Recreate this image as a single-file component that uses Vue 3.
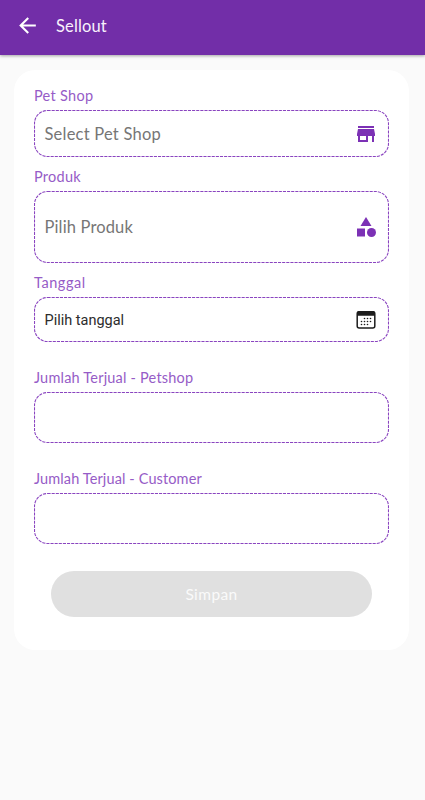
<template>
  <div class="page">
    <header class="app-bar">
      <svg class="app-bar__back" viewBox="0 0 24 24">
        <path d="M20 11H7.83l5.59-5.59L12 4l-8 8 8 8 1.41-1.41L7.83 13H20v-2z" />
      </svg>
      <h1 class="app-bar__title">Sellout</h1>
    </header>

    <main class="card">
      <div v-for="field in fields" :key="field.name" class="field" :class="`field--${field.name}`">
        <label class="field__label"><span :style="{ letterSpacing: field.spacing }">{{ field.label }}</span></label>
        <div class="field__box">
          <svg class="field__outline">
            <rect x="0.5" y="0.5" rx="13" />
          </svg>
          <div class="field__content">
            <span class="field__value">{{ field.value }}</span>
            <svg v-if="field.name === 'shop'" class="field__icon" viewBox="0 0 24 24">
              <path d="M20 4H4v2h16V4zm1 10v-2l-1-5H4l-1 5v2h1v6h10v-6h4v6h2v-6h1zm-9 4H6v-4h6v4z" />
            </svg>
            <svg v-else-if="field.name === 'product'" class="field__icon" viewBox="0 0 24 24">
              <path d="M12 2l-5.5 9h11z" />
              <circle cx="17.5" cy="17.5" r="4.5" />
              <path d="M3 13.5h8v8H3z" />
            </svg>
            <svg v-else-if="field.name === 'date'" class="field__icon field__icon--date" viewBox="0 0 20 20">
              <rect class="frame" x="1.2" y="1.7" width="17.6" height="16.4" rx="2" />
              <path d="M1 5.7V3a2 2 0 0 1 2-2h14a2 2 0 0 1 2 2v2.7z" />
              <circle v-for="dot in dots" :key="dot.join()" :cx="dot[0]" :cy="dot[1]" r="0.8" />
            </svg>
          </div>
        </div>
      </div>

      <button class="submit" disabled>Simpan</button>
    </main>
  </div>
</template>

<script setup>
const fields = [
  { name: 'shop', label: 'Pet Shop', value: 'Select Pet Shop', spacing: '0.3px' },
  { name: 'product', label: 'Produk', value: 'Pilih Produk', spacing: '0.25px' },
  { name: 'date', label: 'Tanggal', value: 'Pilih tanggal', spacing: '0.55px' },
  { name: 'sold-shop', label: 'Jumlah Terjual - Petshop', value: '', spacing: '0.2px' },
  { name: 'sold-customer', label: 'Jumlah Terjual - Customer', value: '', spacing: '0.12px' },
]

// calendar days: the first row starts late, the last one ends early
const dots = [
  [8.5, 8.5], [11.5, 8.5], [14.5, 8.5],
  [5.5, 11.5], [8.5, 11.5], [11.5, 11.5], [14.5, 11.5],
  [5.5, 14.5], [8.5, 14.5], [11.5, 14.5],
]
</script>

<style>
body {
  margin: 0;
  background: #fafafa;
}
</style>

<style scoped>
.page {
  min-height: 800px;
  background: #fafafa;
  font-family: Lato, "Open Sans", sans-serif;
}

.app-bar {
  display: flex;
  align-items: center;
  box-sizing: border-box;
  height: 54.5px;
  padding: 0 15px 3px;
  background: #722ea8;
  box-shadow: 0 1px 3px rgba(0, 0, 0, 0.35);
}

.app-bar__back {
  width: 25px;
  height: 25px;
  fill: #fff;
}

.app-bar__title {
  margin: 0 0 0 16px;
  color: #f8f2fc;
  font-size: 16.5px;
  font-weight: 400;
  letter-spacing: 0.15px;
  line-height: 24px;
}

.card {
  display: flex;
  flex-direction: column;
  box-sizing: border-box;
  width: 395.5px;
  height: 580px;
  margin: 15.5px 0 0 13.5px;
  padding: 16px 20px 0 20.5px;
  border-radius: 21px;
  background: #fff;
}

.field__label {
  display: block;
  height: 24px;
  color: #965cc7;
  font-size: 14.5px;
  line-height: 20px;
  white-space: nowrap;
}

.field__box {
  display: grid;
  width: 355px;
  height: 47px;
}

.field__outline {
  grid-area: 1 / 1;
  width: 100%;
  height: 100%;
}

.field__outline rect {
  width: calc(100% - 1px);
  height: calc(100% - 1px);
  fill: none;
  stroke: #8a45c0;
  stroke-width: 1.1;
  stroke-dasharray: 3.1 1.03;
}

.field__content {
  grid-area: 1 / 1;
  display: flex;
  align-items: center;
  justify-content: space-between;
  padding: 0 11px 0 10.5px;
}

.field__value {
  color: #767676;
  font-size: 16.5px;
  letter-spacing: 0.22px;
}

.field__icon {
  width: 24px;
  height: 24px;
  fill: #7c31b5;
}

.field--product {
  margin-top: 10px;
}

.field--product .field__box {
  height: 72px;
}

.field--product .field__value {
  letter-spacing: 0.15px;
}

.field--date {
  margin-top: 10px;
}

.field--date .field__box {
  height: 45px;
}

.field--date .field__content {
  padding-top: 1px;
}

.field--date .field__value {
  color: #2c2c2c;
  font-family: Roboto, sans-serif;
  font-size: 14.5px;
  letter-spacing: 0;
}

.field__icon--date {
  width: 20px;
  height: 20px;
  margin-right: 2px;
  fill: #1d1d1d;
}

.field__icon--date .frame {
  fill: none;
  stroke: #1d1d1d;
  stroke-width: 1.5;
}

.field--sold-shop {
  margin-top: 26px;
}

.field--sold-customer {
  margin-top: 26px;
}

.field--sold-shop .field__box,
.field--sold-customer .field__box {
  height: 51px;
}

.submit {
  width: 321px;
  height: 46px;
  margin: 27px 0 0 17px;
  padding: 0;
  border: 0;
  border-radius: 23px;
  background: #e0e0e0;
  color: #fafafa;
  font-family: inherit;
  font-size: 15.5px;
  letter-spacing: 0.4px;
}
</style>
